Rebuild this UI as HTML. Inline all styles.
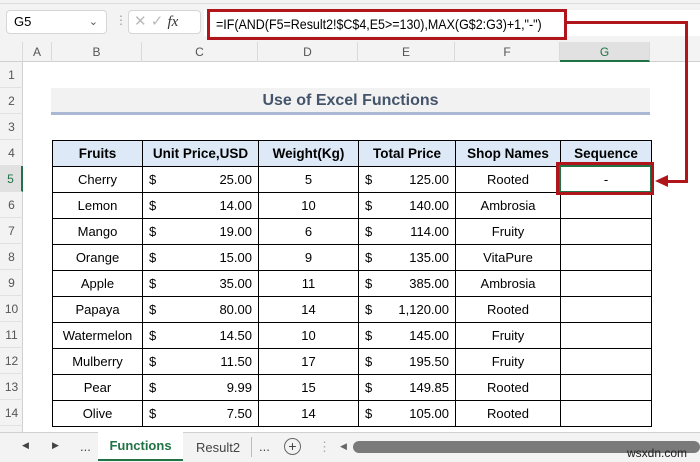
<!DOCTYPE html>
<html><head><style>
*{margin:0;padding:0;box-sizing:border-box}
body{width:700px;height:462px;position:relative;overflow:hidden;background:#fff;font-family:"Liberation Sans",sans-serif;}
.a{position:absolute}
table{border-collapse:collapse;position:absolute;left:52px;top:140px;font-size:13px;color:#000}
td{border:1px solid #000;height:26px;padding:0 6px}
th{border:1px solid #000;height:26px;background:#dde9f6;font-weight:bold;font-size:13.5px}
.c{text-align:center}
.m{display:flex;justify-content:space-between}
.rh{position:absolute;left:0;width:23px;text-align:center;font-size:12px;color:#555;height:26px;line-height:26px;border-bottom:1px solid #e1e1e1}
.ch{position:absolute;top:42px;height:20px;line-height:20px;text-align:center;font-size:12px;color:#555;border-right:1px solid #dadada}
</style></head><body>
<div class="a" style="left:0;top:0;width:700px;height:4px;background:#f3f3f3;border-bottom:1px solid #ddd"></div>
<div class="a" style="left:0;top:4px;width:700px;height:38px;background:#f3f3f3"></div>
<div class="a" style="left:6px;top:10px;width:101px;height:24px;background:#fff;border:1px solid #d6d6d6;border-radius:4px;font-size:13px;line-height:22px;padding-left:7px">G5<span style="position:absolute;right:8px;top:0;color:#555;font-size:11px">&#8964;</span></div>
<div class="a" style="left:115px;top:13px;color:#999;font-size:12px">&#8942;</div>
<div class="a" style="left:128px;top:10px;width:73px;height:24px;background:#fff;border:1px solid #d6d6d6;border-radius:4px;font-size:15px;line-height:22px;color:#bbb;padding-left:5px">✕ ✓ <i style="color:#333;font-family:'Liberation Serif',serif">fx</i></div>
<div class="a" style="left:204px;top:10px;width:496px;height:26px;background:#fff"></div>
<div class="a" style="left:207px;top:9px;width:360px;height:31px;border:3px solid #b0151c;font-size:14px;line-height:25px;padding-left:6px;color:#000;white-space:nowrap;overflow:hidden"><span style="display:inline-block;transform:scaleX(0.89);transform-origin:left center">=IF(AND(F5=Result2!$C$4,E5&gt;=130),MAX(G$2:G3)+1,"-")</span></div>
<div class="a" style="left:0;top:42px;width:700px;height:20px;background:#f3f3f3;border-bottom:1px solid #d0d0d0"></div>
<div class="ch" style="left:0;width:23px"></div>
<div class="ch" style="left:23px;width:29px">A</div>
<div class="ch" style="left:52px;width:90px">B</div>
<div class="ch" style="left:142px;width:116px">C</div>
<div class="ch" style="left:258px;width:100px">D</div>
<div class="ch" style="left:358px;width:97px">E</div>
<div class="ch" style="left:455px;width:105px">F</div>
<div class="ch" style="left:560px;width:90px;background:#e1e1e1;color:#217346;border-bottom:2px solid #217346">G</div>
<div class="a" style="left:0;top:62px;width:23px;height:370px;background:#f3f3f3;border-right:1px solid #d0d0d0"></div>
<div class="rh" style="top:62px">1</div><div class="rh" style="top:88px">2</div><div class="rh" style="top:114px">3</div><div class="rh" style="top:140px">4</div><div class="rh" style="top:166px;color:#217346;background:#e1e1e1;border-right:2px solid #217346">5</div><div class="rh" style="top:192px">6</div><div class="rh" style="top:218px">7</div><div class="rh" style="top:244px">8</div><div class="rh" style="top:270px">9</div><div class="rh" style="top:296px">10</div><div class="rh" style="top:322px">11</div><div class="rh" style="top:348px">12</div><div class="rh" style="top:374px">13</div><div class="rh" style="top:400px">14</div>
<div class="a" style="left:51px;top:88px;width:599px;height:27px;background:#f2f2f2;border-bottom:3px solid #aab8d4;text-align:center;font-weight:bold;font-size:16px;line-height:25px;color:#44546a">Use of Excel Functions</div>
<table>
<tr><th style="width:90px">Fruits</th><th style="width:116px">Unit Price,USD</th><th style="width:100px">Weight(Kg)</th><th style="width:97px">Total Price</th><th style="width:105px">Shop Names</th><th style="width:91px">Sequence</th></tr>
<tr><td class="c">Cherry</td><td><div class="m"><span>$</span><span>25.00</span></div></td><td class="c">5</td><td><div class="m"><span>$</span><span>125.00</span></div></td><td class="c">Rooted</td><td class="c">-</td></tr>
<tr><td class="c">Lemon</td><td><div class="m"><span>$</span><span>14.00</span></div></td><td class="c">10</td><td><div class="m"><span>$</span><span>140.00</span></div></td><td class="c">Ambrosia</td><td></td></tr>
<tr><td class="c">Mango</td><td><div class="m"><span>$</span><span>19.00</span></div></td><td class="c">6</td><td><div class="m"><span>$</span><span>114.00</span></div></td><td class="c">Fruity</td><td></td></tr>
<tr><td class="c">Orange</td><td><div class="m"><span>$</span><span>15.00</span></div></td><td class="c">9</td><td><div class="m"><span>$</span><span>135.00</span></div></td><td class="c">VitaPure</td><td></td></tr>
<tr><td class="c">Apple</td><td><div class="m"><span>$</span><span>35.00</span></div></td><td class="c">11</td><td><div class="m"><span>$</span><span>385.00</span></div></td><td class="c">Ambrosia</td><td></td></tr>
<tr><td class="c">Papaya</td><td><div class="m"><span>$</span><span>80.00</span></div></td><td class="c">14</td><td><div class="m"><span>$</span><span>1,120.00</span></div></td><td class="c">Rooted</td><td></td></tr>
<tr><td class="c">Watermelon</td><td><div class="m"><span>$</span><span>14.50</span></div></td><td class="c">10</td><td><div class="m"><span>$</span><span>145.00</span></div></td><td class="c">Fruity</td><td></td></tr>
<tr><td class="c">Mulberry</td><td><div class="m"><span>$</span><span>11.50</span></div></td><td class="c">17</td><td><div class="m"><span>$</span><span>195.50</span></div></td><td class="c">Fruity</td><td></td></tr>
<tr><td class="c">Pear</td><td><div class="m"><span>$</span><span>9.99</span></div></td><td class="c">15</td><td><div class="m"><span>$</span><span>149.85</span></div></td><td class="c">Rooted</td><td></td></tr>
<tr><td class="c">Olive</td><td><div class="m"><span>$</span><span>7.50</span></div></td><td class="c">14</td><td><div class="m"><span>$</span><span>105.00</span></div></td><td class="c">Rooted</td><td></td></tr>
</table>
<div class="a" style="left:559px;top:165px;width:93px;height:28px;border:2px solid #217346"></div>
<div class="a" style="left:556px;top:162px;width:98px;height:33px;border:3px solid #b0151c"></div>
<div class="a" style="left:567px;top:21px;width:121px;height:3px;background:#b0151c"></div>
<div class="a" style="left:685px;top:21px;width:3px;height:162px;background:#b0151c"></div>
<div class="a" style="left:666px;top:180px;width:22px;height:3px;background:#b0151c"></div>
<div class="a" style="left:655px;top:175px;width:0;height:0;border-top:6.5px solid transparent;border-bottom:6.5px solid transparent;border-right:13px solid #b0151c"></div>
<div class="a" style="left:0;top:432px;width:700px;height:30px;background:#f3f3f3;border-top:1px solid #d0d0d0;font-size:13px;color:#444">
<span class="a" style="left:22px;top:7px;font-size:9px">◀</span>
<span class="a" style="left:52px;top:7px;font-size:9px">▶</span>
<span class="a" style="left:80px;top:6px">...</span>
<div class="a" style="left:98px;top:-1px;width:85px;height:29px;background:#fff;border-bottom:2px solid #217346;color:#217346;font-weight:bold;text-align:center;line-height:28px">Functions</div>
<span class="a" style="left:196px;top:7px">Result2</span>
<span class="a" style="left:251px;top:4px;width:1px;height:20px;background:#bbb"></span>
<span class="a" style="left:259px;top:6px">...</span>
<span class="a" style="left:284px;top:5px;width:17px;height:17px;border:1px solid #666;border-radius:50%;text-align:center;line-height:15px;font-size:14px">+</span>
<span class="a" style="left:318px;top:6px;color:#aaa">⋮</span>
<span class="a" style="left:340px;top:8px;font-size:9px;color:#666">◀</span>
<div class="a" style="left:353px;top:8px;width:347px;height:12px;background:#7a7a7a;border-radius:6px"></div>
<span class="a" style="left:627px;top:13px;font-size:12px;color:#222">wsxdn.com</span>
</div>
</body></html>
